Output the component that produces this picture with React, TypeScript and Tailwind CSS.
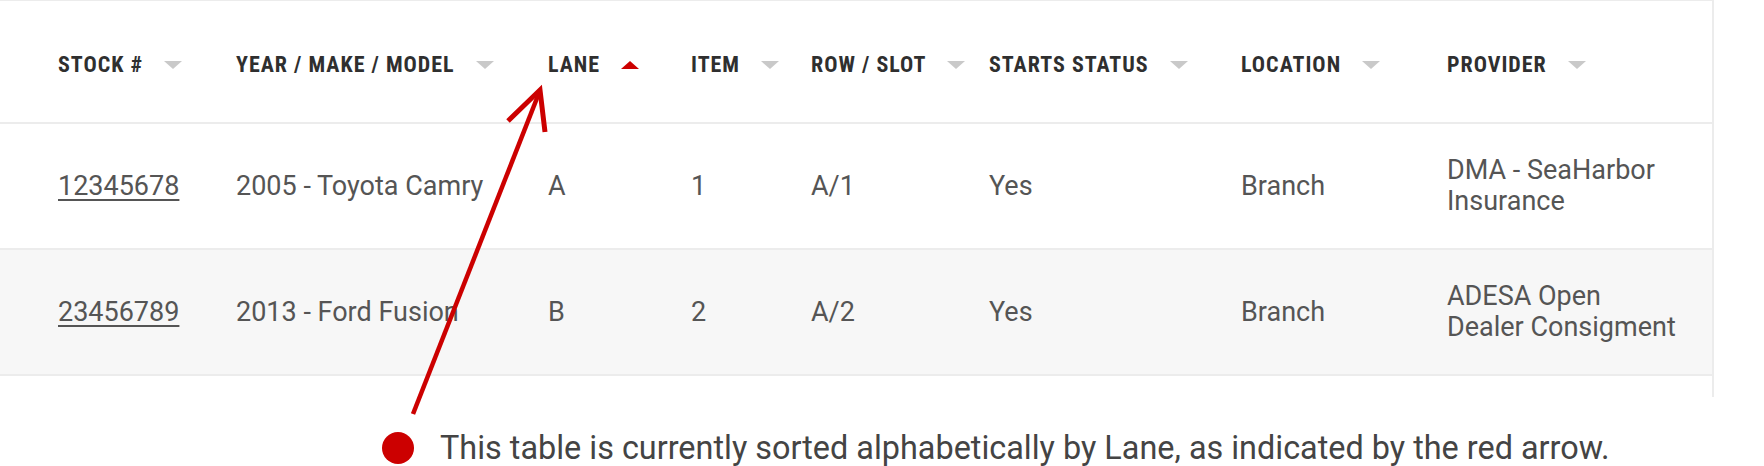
import React from "react";

const cols = "grid grid-cols-[178px_312px_143px_120px_178px_252px_206px_1fr] pl-[58px]";

function SortIcon({ active }: { active?: boolean }) {
  return active ? (
    <svg width="18" height="8" viewBox="0 0 18 8" className="shrink-0">
      <polygon points="0,8 18,8 9,0" fill="#cc0000" />
    </svg>
  ) : (
    <svg width="18" height="8" viewBox="0 0 18 8" className="shrink-0">
      <polygon points="0,0 18,0 9,8" fill="#c9c9c9" />
    </svg>
  );
}

const headers: { label: string; active?: boolean }[] = [
  { label: "STOCK #" },
  { label: "YEAR / MAKE / MODEL" },
  { label: "LANE", active: true },
  { label: "ITEM" },
  { label: "ROW / SLOT" },
  { label: "STARTS STATUS" },
  { label: "LOCATION" },
  { label: "PROVIDER" },
];

const rows = [
  {
    stock: "12345678",
    ymm: "2005 - Toyota Camry",
    lane: "A",
    item: "1",
    slot: "A/1",
    starts: "Yes",
    loc: "Branch",
    provider: ["DMA - SeaHarbor", "Insurance"],
  },
  {
    stock: "23456789",
    ymm: "2013 - Ford Fusion",
    lane: "B",
    item: "2",
    slot: "A/2",
    starts: "Yes",
    loc: "Branch",
    provider: ["ADESA Open", "Dealer Consigment"],
  },
];

export default function App() {
  return (
    <div className="relative w-[1764px] h-[466px] bg-white overflow-hidden font-['Roboto','Liberation_Sans',sans-serif]">
      <div className="w-[1714px] border-r-2 border-t border-[#ececec] pb-[21px]">
        <div className={`${cols} h-[123px] items-center border-b-2 border-[#ececec] pt-[6px]`}>
          {headers.map((h) => (
            <div key={h.label} className="flex items-center gap-[21px]">
              <span className="text-[22px] font-bold text-[#2f2f2f] tracking-[1px] font-['Roboto_Condensed','Roboto',sans-serif]">
                {h.label}
              </span>
              <SortIcon active={h.active} />
            </div>
          ))}
        </div>
        {rows.map((r, i) => (
          <div
            key={r.stock}
            className={`${cols} h-[126px] items-center border-b-2 border-[#ececec] text-[27px] leading-[31px] text-[#555555] ${
              i === 1 ? "bg-[#f7f7f7]" : "bg-white"
            }`}
          >
            <div>
              <span className="underline decoration-[2px] underline-offset-[4px]">{r.stock}</span>
            </div>
            <div>{r.ymm}</div>
            <div>{r.lane}</div>
            <div>{r.item}</div>
            <div>{r.slot}</div>
            <div>{r.starts}</div>
            <div>{r.loc}</div>
            <div>
              {r.provider[0]}
              <br />
              {r.provider[1]}
            </div>
          </div>
        ))}
      </div>
      <div className="flex items-center gap-[26px] pl-[382px] mt-[35px] h-[32px]">
        <div className="w-[32px] h-[32px] rounded-full bg-[#cc0000] shrink-0" />
        <span className="text-[32.4px] text-[#444444] whitespace-nowrap">
          This table is currently sorted alphabetically by Lane, as indicated by the red arrow.
        </span>
      </div>
      <svg
        className="absolute inset-0 pointer-events-none"
        width="1764"
        height="466"
        viewBox="0 0 1764 466"
      >
        <line x1="413" y1="414" x2="539" y2="93" stroke="#cc0000" strokeWidth="4.5" />
        <polyline
          points="508,121 540,90 545,132"
          fill="none"
          stroke="#cc0000"
          strokeWidth="5"
          strokeLinejoin="miter"
        />
      </svg>
    </div>
  );
}
